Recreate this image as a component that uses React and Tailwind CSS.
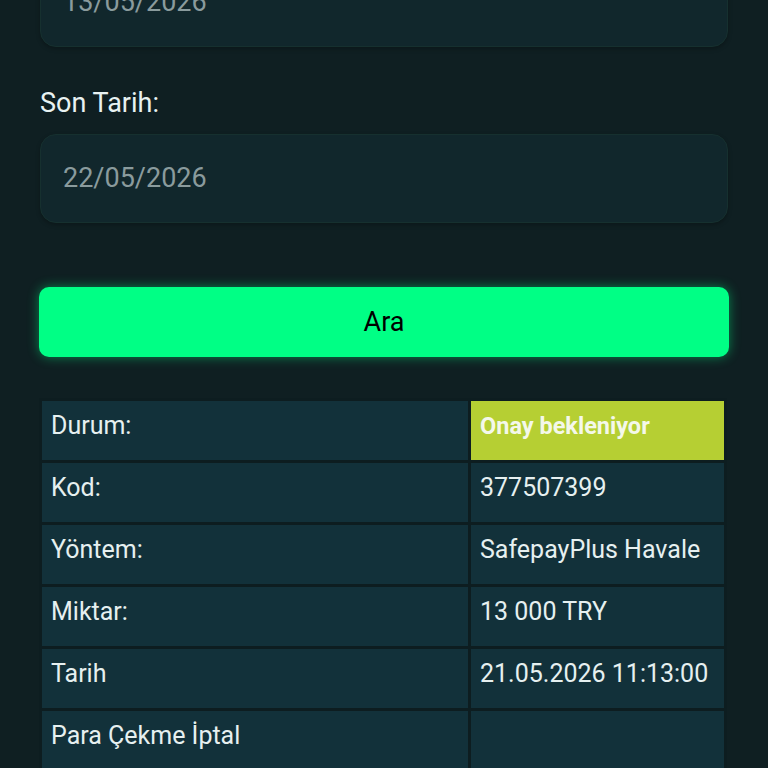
export default function App() {
  const rows = [
    { k: "Durum:", v: "Onay bekleniyor", status: true },
    { k: "Kod:", v: "377507399" },
    { k: "Yöntem:", v: "SafepayPlus Havale" },
    { k: "Miktar:", v: "13 000 TRY" },
    { k: "Tarih", v: "21.05.2026 11:13:00" },
    { k: "Para Çekme İptal", v: "" },
  ];
  return (
    <div
      className="min-h-[768px] w-full overflow-hidden bg-[#0f1f22] text-[#e6f0f0]"
      style={{ fontFamily: "Roboto, 'Noto Sans', sans-serif" }}
    >
      <div className="px-[40px] -mt-[42px]">
        <div className="h-[89px] rounded-[16px] border border-[#16302f] bg-[#11272c] pl-[22px] flex items-center text-[27px] text-[#8a9b9d] shadow-[0_2px_4px_rgba(0,0,0,0.25)]">
          13/05/2026
        </div>
        <div className="mt-[39px] text-[27px] leading-[34px] text-[#e8f2f2]">Son Tarih:</div>
        <div className="mt-[14px] h-[89px] rounded-[16px] border border-[#16302f] bg-[#11272c] pl-[22px] flex items-center text-[27px] text-[#8a9b9d] shadow-[0_2px_4px_rgba(0,0,0,0.25)]">
          22/05/2026
        </div>
        <button className="mt-[64px] -ml-[1px] w-[690px] h-[70px] rounded-[10px] bg-[#00ff85] text-black text-[27px] flex items-center justify-center shadow-[0_0_12px_rgba(0,255,133,0.45)]">
          Ara
        </button>
      </div>
      <div className="px-[39px] mt-[41px]">
        <table className="w-[688px] border-separate border-spacing-[3px] bg-[#0d1d20]">
          <tbody>
            {rows.map((r, i) => (
              <tr key={i}>
                <td className="w-[426px] h-[59px] align-top bg-[#12313a] pl-[9px] pt-[8px] text-[25px] leading-[33px] text-[#e6f0f0]">
                  {r.k}
                </td>
                <td
                  className={
                    r.status
                      ? "h-[59px] align-top bg-[#b6cf33] pl-[9px] pt-[9px] text-[23.5px] leading-[32px] font-bold text-[#f4f8ea]"
                      : "h-[59px] align-top bg-[#12313a] pl-[9px] pt-[8px] text-[25px] leading-[33px] text-[#e6f0f0]"
                  }
                >
                  {r.v}
                </td>
              </tr>
            ))}
          </tbody>
        </table>
      </div>
    </div>
  );
}
